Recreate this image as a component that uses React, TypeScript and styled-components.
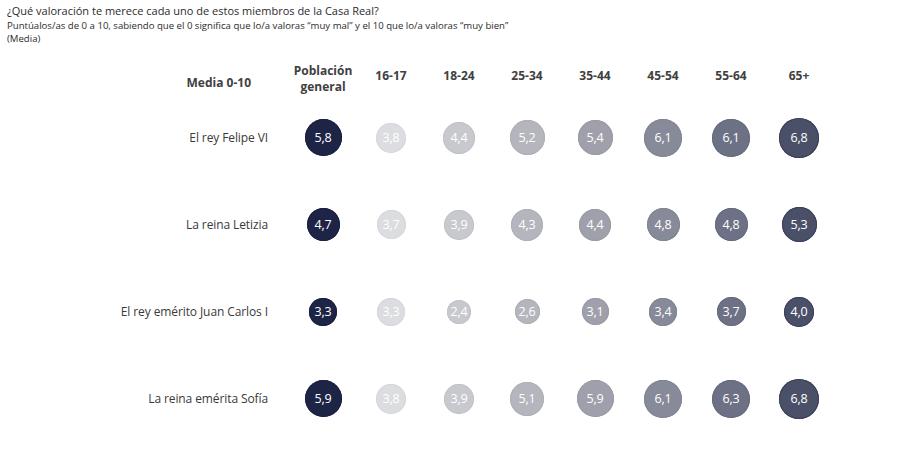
import styled, { createGlobalStyle } from 'styled-components'

const GlobalStyle = createGlobalStyle`
  html, body {
    margin: 0;
    padding: 0;
    background: #ffffff;
  }
  body {
    font-family: "Open Sans", "Liberation Sans", sans-serif;
    color: #333;
  }
`

const Page = styled.div`
  width: 900px;
  height: 450px;
  padding: 3px 7px 0;
  box-sizing: border-box;
  overflow: hidden;
`

const Title = styled.h1`
  margin: 0;
  font-size: 11px;
  font-weight: 400;
  line-height: 16px;
  color: #2b2b2b;
`

const Subtitle = styled.p`
  margin: 0;
  font-size: 9.6px;
  line-height: 13px;
  font-weight: 500;
  color: #2b2b2b;
`

const Table = styled.div`
  display: grid;
  grid-template-columns: 282px repeat(8, 68px);
  margin-top: 13px;
`

const HeaderCell = styled.div<{ $pad?: number }>`
  height: 36px;
  display: flex;
  flex-direction: column;
  align-items: center;
  justify-content: center;
  text-align: center;
  font-size: 12px;
  line-height: 16px;
  font-weight: 700;
  color: #404040;
  padding-top: ${p => p.$pad ?? 0}px;
  box-sizing: border-box;
`

const HeaderLine = styled.span`
  display: block;
  height: 16px;
`

const LabelHeader = styled(HeaderCell)`
  align-items: flex-end;
  padding-right: 38px;
  padding-top: 14px;
`

const RowLabel = styled.div`
  height: 87px;
  display: flex;
  align-items: center;
  justify-content: flex-end;
  padding-right: 21px;
  font-size: 12px;
  color: #3a3a3a;
  letter-spacing: -0.1px;
`

const Cell = styled.div`
  height: 87px;
  display: flex;
  align-items: center;
  justify-content: center;
`

const Bubble = styled.div<{ $bg: string; $ring: string }>`
  border-radius: 50%;
  background: ${p => p.$bg};
  box-shadow: inset 0 0 0 1px ${p => p.$ring};
  display: flex;
  align-items: center;
  justify-content: center;
  color: #ffffff;
  font-size: 12.5px;
  letter-spacing: -0.2px;
`

const columns = [
  { label: ['Población', 'general'], bg: '#1d2446', ring: '#1a2040' },
  { label: ['16-17'], bg: '#dcdde1', ring: '#d6d7db' },
  { label: ['18-24'], bg: '#c8c9ce', ring: '#c2c3c8' },
  { label: ['25-34'], bg: '#b4b5bd', ring: '#aeafb7' },
  { label: ['35-44'], bg: '#9fa0ab', ring: '#999aa5' },
  { label: ['45-54'], bg: '#878a98', ring: '#818492' },
  { label: ['55-64'], bg: '#6d7185', ring: '#666a7e' },
  { label: ['65+'], bg: '#4b5069', ring: '#3a3f57' },
]

const rows = [
  { name: 'El rey Felipe VI', values: [5.8, 3.8, 4.4, 5.2, 5.4, 6.1, 6.1, 6.8] },
  { name: 'La reina Letizia', values: [4.7, 3.7, 3.9, 4.3, 4.4, 4.8, 4.8, 5.3] },
  { name: 'El rey emérito Juan Carlos I', values: [3.3, 3.3, 2.4, 2.6, 3.1, 3.4, 3.7, 4.0] },
  { name: 'La reina emérita Sofía', values: [5.9, 3.8, 3.9, 5.1, 5.9, 6.1, 6.3, 6.8] },
]

const fmt = (v: number) => v.toFixed(1).replace('.', ',')

const App = () => {
  return (
    <Page>
      <GlobalStyle />
      <Title>¿Qué valoración te merece cada uno de estos miembros de la Casa Real?</Title>
      <Subtitle>Puntúalos/as de 0 a 10, sabiendo que el 0 significa que lo/a valoras “muy mal” y el 10 que lo/a valoras “muy bien”</Subtitle>
      <Subtitle>(Media)</Subtitle>
      <Table>
        <LabelHeader>Media 0-10</LabelHeader>
        {columns.map((c, i) => (
          <HeaderCell key={c.label.join()} $pad={i === 0 ? 6 : 0}>
            {c.label.map(l => <HeaderLine key={l}>{l}</HeaderLine>)}
          </HeaderCell>
        ))}
        {rows.map(r => (
          <>
            <RowLabel key={r.name}>{r.name}</RowLabel>
            {r.values.map((v, i) => {
              const d = Math.round(15.2 * Math.sqrt(v))
              return (
                <Cell key={r.name + i}>
                  <Bubble $bg={columns[i].bg} $ring={columns[i].ring} style={{ width: d, height: d }}>
                    {fmt(v)}
                  </Bubble>
                </Cell>
              )
            })}
          </>
        ))}
      </Table>
    </Page>
  )
}

export default App
